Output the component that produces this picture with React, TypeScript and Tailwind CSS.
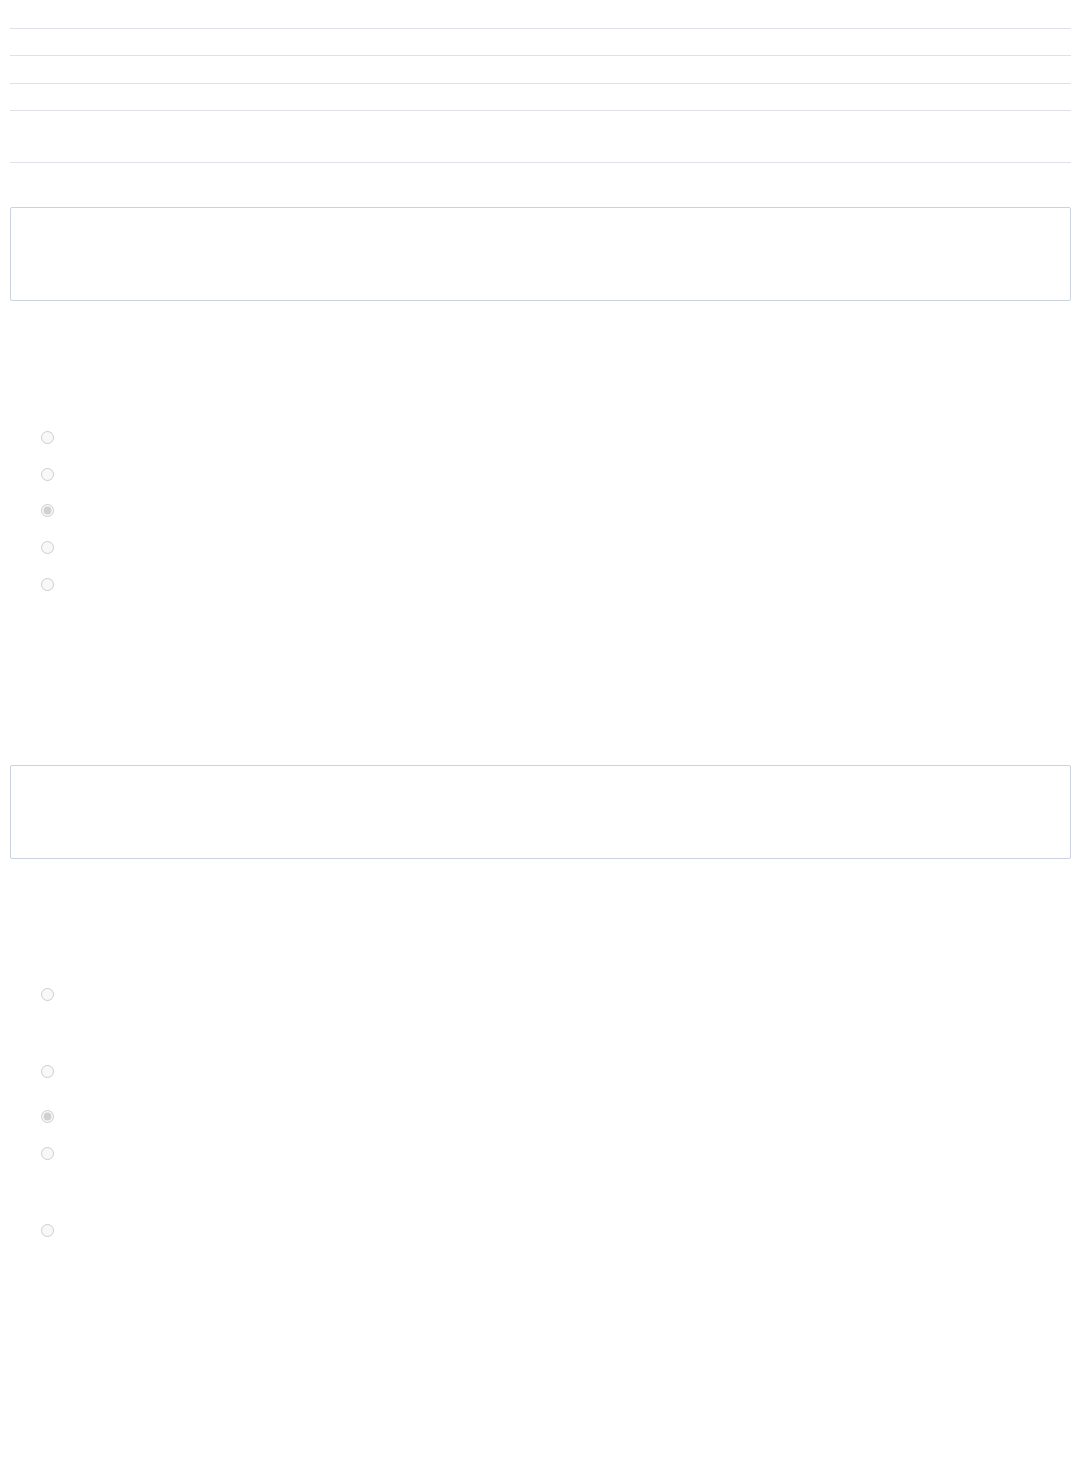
export default function App() {
  const firstGroup = [false, false, true, false, false];
  const secondGroup = [
    { checked: false, h: "h-[77px]" },
    { checked: false, h: "h-[45px]" },
    { checked: true, h: "h-[37px]" },
    { checked: false, h: "h-[77px]" },
    { checked: false, h: "h-[40px]" },
  ];

  return (
    <main className="min-h-[1480px] bg-white pl-[10px] pr-[8px] pt-[28px] font-['Liberation_Sans',sans-serif] text-[#212529]">
      {/* table-like rows */}
      <div className="h-[27px] border-t border-[#dee2e6]" />
      <div className="h-[28px] border-t border-[#dee2e6]" />
      <div className="h-[27px] border-t border-[#dee2e6]" />
      <div className="h-[52px] border-t border-[#dee2e6]" />
      <div className="h-[45px] border-t border-[#dee2e6]" />

      {/* first box */}
      <div className="h-[94px] rounded-[2px] border border-[#ccd3df]" />

      {/* first radio group */}
      <div className="mt-[130px] flex flex-col">
        {firstGroup.map((checked, i) => (
          <label key={i} className="flex h-[36.7px] items-start pl-[31px]">
            <input
              type="radio"
              name="group-one"
              disabled
              defaultChecked={checked}
              className="m-0 h-[13px] w-[13px]"
            />
          </label>
        ))}
      </div>

      {/* second box */}
      <div className="mt-[151px] h-[94px] rounded-[2px] border border-[#ccd3df]" />

      {/* second radio group */}
      <div className="mt-[129px] flex flex-col">
        {secondGroup.map((item, i) => (
          <label key={i} className={`flex items-start pl-[31px] ${item.h}`}>
            <input
              type="radio"
              name="group-two"
              disabled
              defaultChecked={item.checked}
              className="m-0 h-[13px] w-[13px]"
            />
          </label>
        ))}
      </div>
    </main>
  );
}
